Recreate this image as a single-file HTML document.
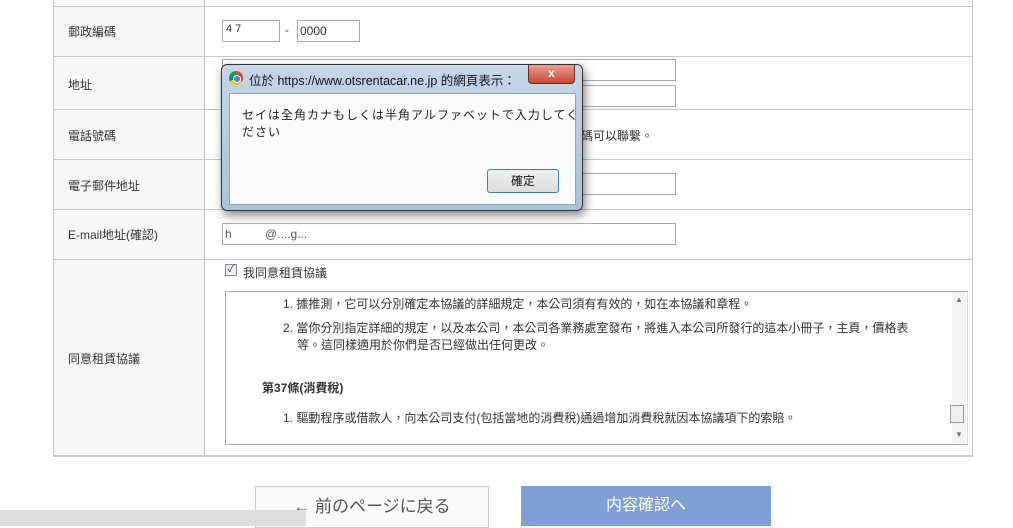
<!DOCTYPE html>
<html><head><meta charset="utf-8"><style>
body{margin:0;width:1013px;height:526px;background:#fff;position:relative;overflow:hidden;font-family:"Liberation Sans","Noto Sans CJK TC",sans-serif;font-size:12px;color:#333}
.a{position:absolute}
.tbl{left:53px;top:6px;width:918px;height:449px;border:1px solid #c8c8c8;border-top:1px solid #c8c8c8}
.lab{left:54px;width:150px;background:#f7f7f7;border-right:1px solid #c8c8c8}
.hl{left:53px;width:920px;height:1px;background:#c8c8c8}
.lt{left:68px;font-size:12px;color:#333}
.inp{border:1px solid #aaa;background:#fff;height:20px}
</style></head><body>
<div class="a tbl"></div>
<div class="a lab" style="top:0;height:455px"></div>
<div class="a hl" style="top:6px"></div>
<div class="a hl" style="top:56px"></div>
<div class="a hl" style="top:109px"></div>
<div class="a hl" style="top:159px"></div>
<div class="a hl" style="top:209px"></div>
<div class="a hl" style="top:259px"></div>
<div class="a hl" style="top:455px"></div>
<div class="a" style="left:53px;top:0;width:1px;height:456px;background:#c8c8c8"></div>
<div class="a" style="left:972px;top:0;width:1px;height:456px;background:#c8c8c8"></div>
<div class="a lt" style="top:23px">郵政編碼</div>
<div class="a lt" style="top:76px">地址</div>
<div class="a lt" style="top:127px">電話號碼</div>
<div class="a lt" style="top:177px">電子郵件地址</div>
<div class="a lt" style="top:226px">E-mail地址(確認)</div>
<div class="a lt" style="top:350px">同意租賃協議</div>
<div class="a inp" style="left:222px;top:20px;width:56px;"><span style="font-size:11px;padding-left:3px">4 7</span></div>
<div class="a" style="left:285px;top:23px">-</div>
<div class="a inp" style="left:297px;top:20px;width:61px;"><span style="padding-left:2px;line-height:20px">0000</span></div>
<div class="a inp" style="left:222px;top:59px;width:452px"></div>
<div class="a inp" style="left:222px;top:85px;width:452px"></div>
<div class="a" style="left:581px;top:127px">碼可以聯繫。</div>
<div class="a inp" style="left:222px;top:173px;width:452px"></div>
<div class="a inp" style="left:222px;top:223px;width:452px"><span style="line-height:20px;padding-left:2px;color:#555">h&nbsp;&nbsp;&nbsp;&nbsp;&nbsp;&nbsp;&nbsp;&nbsp;&nbsp;&nbsp;@....g...</span></div>
<div class="a" style="left:225px;top:264px;width:10px;height:10px;border:1px solid #888;background:#eef;font-size:10px;line-height:10px;text-align:center;color:#336">✓</div>
<div class="a" style="left:243px;top:264px">我同意租賃協議</div>
<div class="a" style="left:225px;top:291px;width:741px;height:152px;border:1px solid #aaa;border-right:1px solid #ddd;background:#fff"></div>
<div class="a" style="left:952px;top:292px;width:14px;height:151px;background:#f4f4f4"></div>
<div class="a" style="left:955px;top:295px;font-size:8px;color:#777">▲</div>
<div class="a" style="left:955px;top:430px;font-size:8px;color:#777">▼</div>
<div class="a" style="left:950px;top:405px;width:12px;height:16px;border:1px solid #999;background:#eee"></div>
<div class="a" style="left:283px;top:295px">1. 據推測，它可以分別確定本協議的詳細規定，本公司須有有效的，如在本協議和章程。</div>
<div class="a" style="left:283px;top:319px">2. 當你分別指定詳細的規定，以及本公司，本公司各業務處室發布，將進入本公司所發行的這本小冊子，主頁，價格表</div>
<div class="a" style="left:297px;top:336px">等。這同樣適用於你們是否已經做出任何更改。</div>
<div class="a" style="left:262px;top:379px;font-weight:bold">第37條(消費稅)</div>
<div class="a" style="left:283px;top:409px">1. 驅動程序或借款人，向本公司支付(包括當地的消費稅)通過增加消費稅就因本協議項下的索賠。</div>
<div class="a" style="left:255px;top:486px;width:232px;height:40px;border:1px solid #ccc;background:#fafafa;text-align:center;line-height:40px;font-size:17px;color:#555">← 前のページに戻る</div>
<div class="a" style="left:521px;top:486px;width:250px;height:40px;background:#7f9fd2;text-align:center;line-height:40px;font-size:16px;color:#fff">内容確認へ</div>
<div class="a" style="left:0;top:510px;width:306px;height:16px;background:#dedede"></div>
<!-- dialog -->
<div class="a" style="left:221px;top:64px;width:360px;height:145px;border:1px solid #333;border-radius:6px;background:linear-gradient(#c7d6e8,#b9cde4 40%,#a9c2dd);box-shadow:2px 4px 10px rgba(0,0,0,.5)"></div>
<div class="a" style="left:229px;top:71px;width:14px;height:14px;border-radius:50%;background:conic-gradient(#db4437 0 120deg,#f4c20d 120deg 240deg,#0f9d58 240deg);"></div>
<div class="a" style="left:233px;top:75px;width:6px;height:6px;border-radius:50%;background:#4285f4;border:1px solid #fff"></div>
<div class="a" style="left:249px;top:70px;font-size:12.5px;color:#111">位於 https://www.otsrentacar.ne.jp 的網頁表示：</div>
<div class="a" style="left:528px;top:65px;width:45px;height:18px;border:1px solid #6a2a20;border-top:none;border-radius:0 0 4px 4px;background:linear-gradient(#e9a08e,#c9453a);color:#fff;text-align:center;font-weight:bold;font-size:12px;line-height:17px">x</div>
<div class="a" style="left:229px;top:93px;width:345px;height:110px;border:1px solid #8aa;background:#fbfbfb"></div>
<div class="a" style="left:242px;top:107px;font-size:12px;color:#222;letter-spacing:1px;line-height:17px">セイは全角カナもしくは半角アルファベットで入力してく<br>ださい</div>
<div class="a" style="left:487px;top:169px;width:70px;height:22px;border:1px solid #3c7fb1;border-radius:3px;background:linear-gradient(#f2f2f2,#dcdcdc);text-align:center;line-height:22px;color:#111">確定</div>
</body></html>
